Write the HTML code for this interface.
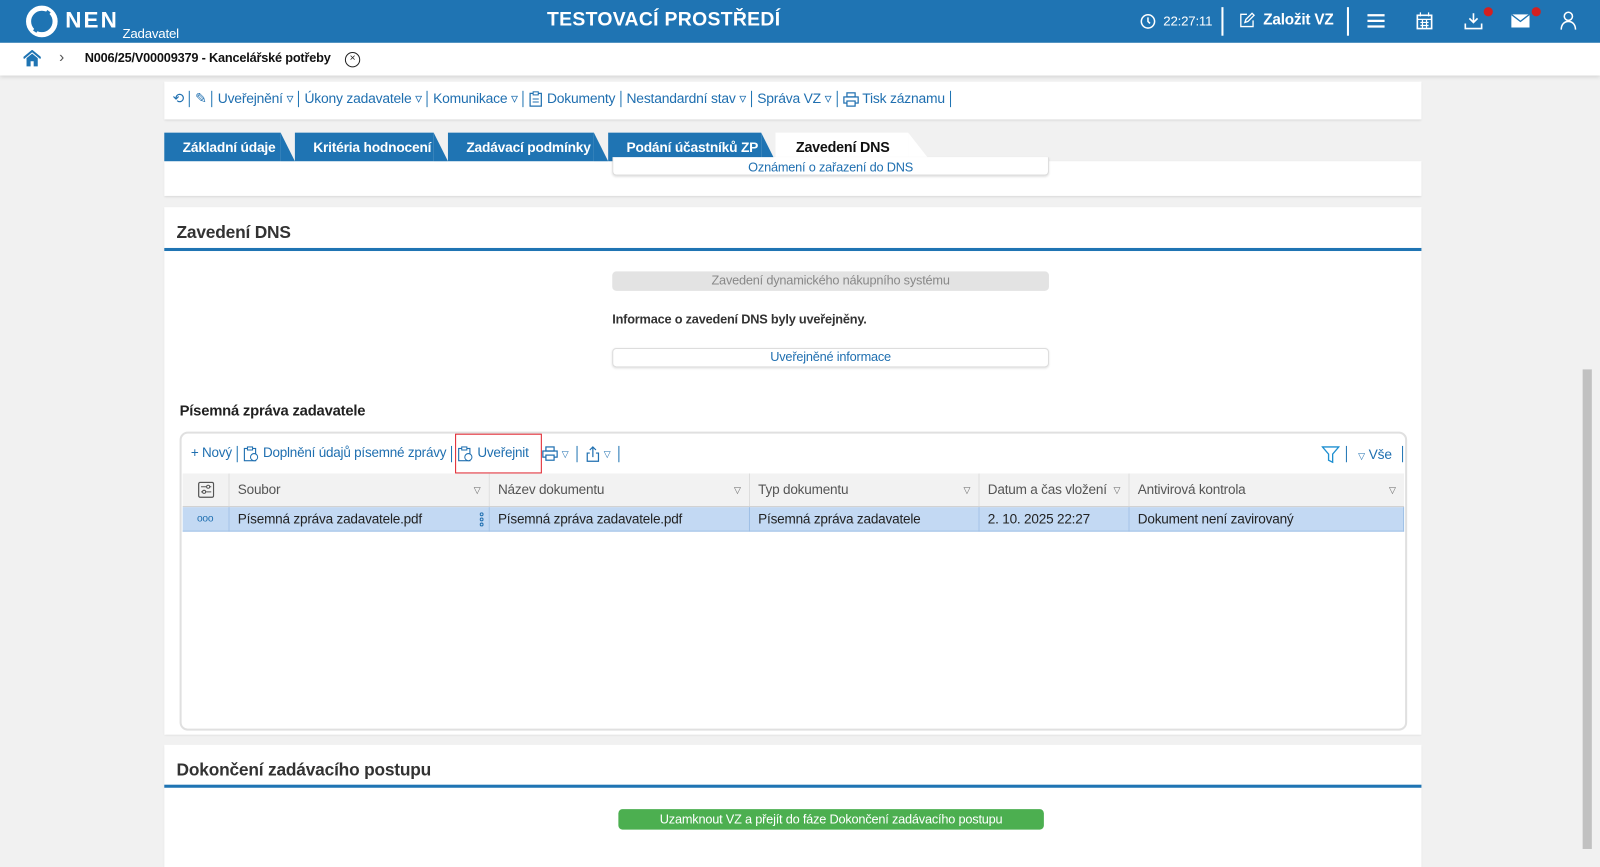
<!DOCTYPE html>
<html><head><meta charset="utf-8"><style>
*{box-sizing:border-box;margin:0;padding:0}
body{width:1600px;height:839px;overflow:hidden;background:#f1f1f1;font-family:"Liberation Sans",sans-serif;font-size:13px;color:#222;letter-spacing:-0.2px}
#w{position:relative;width:1568px;height:823px;transform:scale(1.020408);transform-origin:0 0}
.abs{position:absolute}
.hdr{left:0;top:0;width:1568px;height:42px;background:#1f74b3;color:#fff}
.bc{left:0;top:42px;width:1568px;height:32px;background:#fff;box-shadow:0 2px 4px rgba(0,0,0,.12)}
.panel{background:#fff;box-shadow:0 1px 2px rgba(0,0,0,.1)}
.lnk{color:#1f6fb0}
.sep{display:inline-block;width:1px;height:16px;background:#1f74b3;vertical-align:middle;margin:0 5px}
.tab{position:absolute;top:130px;height:28px;background:#1f74b3;color:#fff;font-weight:bold;font-size:13.5px;line-height:29px;padding-left:18px}
.tab:after{content:"";position:absolute;right:-14px;top:0;border-left:14px solid #1f74b3;border-top:28px solid transparent}
.btn{position:absolute;left:600px;width:428px;height:19px;border:1px solid #ddd;border-radius:4px;text-align:center;line-height:17px;font-size:12.5px;box-shadow:0 1px 2px rgba(0,0,0,.12);background:#fff}
.th{position:absolute;top:464px;height:32px;line-height:32px;color:#555;padding-left:8px;border-right:1px solid #ddd;background:#f2f2f2;font-size:13.3px}
.td{position:absolute;top:497px;height:24px;line-height:24px;padding-left:8px;border-right:1px solid #9fc0e6;background:#c3d9f3;font-size:13.3px}
.tri{position:absolute;right:8px;top:0;font-size:9px;color:#666}
svg{vertical-align:middle}
</style></head><body><div id="w">
<div class="abs hdr">
 <svg class="abs" style="left:25px;top:5px" width="32" height="32" viewBox="0 0 32 32"><circle cx="16" cy="16" r="13" fill="none" stroke="#fff" stroke-width="5"/><path d="M9 26 L23 6" stroke="#1f74b3" stroke-width="4"/></svg>
 <div class="abs" style="left:64px;top:7px;font-size:22px;font-weight:bold;letter-spacing:2px">NEN</div>
 <div class="abs" style="left:120px;top:25px;font-size:13px">Zadavatel</div>
 <div class="abs" style="left:536px;top:9px;font-size:19px;font-weight:bold;letter-spacing:0.3px">TESTOVACÍ PROSTŘEDÍ</div>
 <svg class="abs" style="left:1117px;top:13px" width="16" height="16" viewBox="0 0 16 16"><circle cx="8" cy="8" r="6.5" fill="none" stroke="#fff" stroke-width="1.5"/><path d="M8 4v4l2 2" stroke="#fff" stroke-width="1.5" fill="none"/></svg>
 <div class="abs" style="left:1140px;top:13px;font-size:13px">22:27:11</div>
 <div class="abs" style="left:1197px;top:7px;width:2px;height:28px;background:#fff"></div>
 <svg class="abs" style="left:1214px;top:12px" width="16" height="16" viewBox="0 0 16 16"><path d="M8 2H2v12h12V8M6 10l1-3 6-6 2 2-6 6z" fill="none" stroke="#fff" stroke-width="1.3"/></svg>
 <div class="abs" style="left:1238px;top:11px;font-size:15px;font-weight:bold">Založit VZ</div>
 <div class="abs" style="left:1320px;top:7px;width:2px;height:28px;background:#fff"></div>
 <svg class="abs" style="left:1340px;top:13px" width="17" height="15"><path d="M0 2h17M0 7.5h17M0 13h17" stroke="#fff" stroke-width="2.2"/></svg>
 <svg class="abs" style="left:1388px;top:12px" width="16" height="17"><rect x="1" y="3" width="14" height="13" fill="none" stroke="#fff" stroke-width="1.6"/><path d="M4 0v4M12 0v4M1 7h14M4 10h8M4 13h8M6 7v9M10 7v9" stroke="#fff" stroke-width="1.2"/></svg>
 <svg class="abs" style="left:1435px;top:12px" width="18" height="18"><path d="M9 1v9M5 6l4 4 4-4M1 11v5h16v-5" fill="none" stroke="#fff" stroke-width="1.6"/></svg>
 <div class="abs" style="left:1454px;top:7px;width:9px;height:9px;border-radius:50%;background:#d32020"></div>
 <svg class="abs" style="left:1481px;top:14px" width="18" height="13"><rect x="0" y="0" width="18" height="13" fill="#fff"/><path d="M0 0l9 7 9-7" stroke="#1f74b3" stroke-width="1.3" fill="none"/></svg>
 <div class="abs" style="left:1501px;top:7px;width:9px;height:9px;border-radius:50%;background:#d32020"></div>
 <svg class="abs" style="left:1529px;top:11px" width="16" height="19"><circle cx="8" cy="5" r="4" fill="none" stroke="#fff" stroke-width="1.5"/><path d="M1 18c0-5 3-8 7-8s7 3 7 8" fill="none" stroke="#fff" stroke-width="1.5"/></svg>
</div>
<div class="abs bc">
 <svg class="abs" style="left:23px;top:7px" width="17" height="17"><path d="M0 8L8.5 1 17 8" fill="none" stroke="#1f74b3" stroke-width="2"/><path d="M3 8v8h4v-5h3v5h4V8L8.5 3.5z" fill="#1f74b3"/></svg>
 <div class="abs" style="left:58px;top:6px;color:#555;font-size:15px">&#x203A;</div>
 <div class="abs" style="left:83px;top:8px;font-weight:bold;font-size:12.5px;color:#111">N006/25/V00009379 - Kancelářské potřeby</div>
 <div class="abs" style="left:338px;top:9px;width:15px;height:15px;border:1.3px solid #222;border-radius:50%;font-size:10px;text-align:center;line-height:12px">×</div>
</div>
<div class="abs panel" style="left:161px;top:80px;width:1232px;height:37px;padding:9px 0 0 8px;font-size:13.6px">
 <span class="lnk">⟲</span><span class="sep"></span><span class="lnk">✎</span><span class="sep"></span><span class="lnk">Uveřejnění ▿</span><span class="sep"></span><span class="lnk">Úkony zadavatele ▿</span><span class="sep"></span><span class="lnk">Komunikace ▿</span><span class="sep"></span><span class="lnk"><svg width="14" height="16"><rect x="1.5" y="2.5" width="11" height="12.5" fill="none" stroke="#1f6fb0" stroke-width="1.2"/><rect x="4.5" y="1" width="5" height="3" fill="#fff" stroke="#1f6fb0"/><path d="M4 8h6M4 11h6" stroke="#1f6fb0"/></svg> Dokumenty</span><span class="sep"></span><span class="lnk">Nestandardní stav ▿</span><span class="sep"></span><span class="lnk">Správa VZ ▿</span><span class="sep"></span><span class="lnk"><svg width="16" height="15"><rect x="4" y="1" width="8" height="4" fill="none" stroke="#1f6fb0" stroke-width="1.2"/><rect x="1" y="5" width="14" height="6" fill="none" stroke="#1f6fb0" stroke-width="1.2"/><rect x="4" y="9" width="8" height="5" fill="#fff" stroke="#1f6fb0" stroke-width="1.2"/></svg> Tisk záznamu</span><span class="sep"></span>
</div>
<div class="abs panel" style="left:161px;top:158px;width:1232px;height:34px"></div>
<div class="tab" style="left:161px;width:114px">Základní údaje</div>
<div class="tab" style="left:289px;width:136px">Kritéria hodnocení</div>
<div class="tab" style="left:439px;width:143px">Zadávací podmínky</div>
<div class="tab" style="left:596px;width:150px">Podání účastníků ZP</div>
<div class="abs" style="left:760px;top:130px;width:130px;height:28px;background:#fff;color:#111;font-weight:bold;font-size:14px;line-height:29px;padding-left:20px">Zavedení DNS</div>
<div class="abs" style="left:890px;top:130px;border-left:22px solid #fff;border-top:28px solid transparent;width:0"></div>
<div class="btn lnk" style="top:154px;height:18px;border-top:none;border-radius:0 0 4px 4px;line-height:20px">Oznámení o zařazení do DNS</div>

<div class="abs panel" style="left:161px;top:203px;width:1232px;height:517px">
 <div class="abs" style="left:12px;top:15px;font-size:17px;font-weight:bold;color:#333">Zavedení DNS</div>
 <div class="abs" style="left:0;top:40px;width:1232px;height:3px;background:#1f74b3"></div>
</div>
<div class="btn" style="top:266px;background:#e3e3e3;border-color:#e3e3e3;color:#888;box-shadow:none">Zavedení dynamického nákupního systému</div>
<div class="abs" style="left:600px;top:306px;font-weight:bold;font-size:12.5px;color:#333">Informace o zavedení DNS byly uveřejněny.</div>
<div class="btn lnk" style="top:341px">Uveřejněné informace</div>
<div class="abs" style="left:176px;top:395px;font-weight:bold;font-size:14.5px;color:#222">Písemná zpráva zadavatele</div>

<div class="abs" style="left:176px;top:423px;width:1203px;height:293px;border:2px solid #e0e0e0;border-radius:8px;background:#fff"></div>
<div class="abs" style="left:187px;top:436px;font-size:13.2px">
 <span class="lnk">+ Nový</span><span class="sep"></span><span class="lnk"><svg width="16" height="16"><rect x="1.5" y="2.5" width="11" height="12" fill="none" stroke="#1f6fb0" stroke-width="1.1"/><rect x="4.5" y="1" width="5" height="3" fill="#fff" stroke="#1f6fb0"/><circle cx="11" cy="11" r="3.5" fill="#fff" stroke="#1f6fb0"/></svg> Doplnění údajů písemné zprávy</span><span class="sep"></span><span class="lnk"><svg width="16" height="16"><rect x="1.5" y="2.5" width="11" height="12" fill="none" stroke="#1f6fb0" stroke-width="1.1"/><rect x="4.5" y="1" width="5" height="3" fill="#fff" stroke="#1f6fb0"/><circle cx="11" cy="11" r="3.5" fill="#fff" stroke="#1f6fb0"/></svg> Uveřejnit</span><span class="sep" style="background:transparent;margin:0 6px"></span><span class="lnk"><svg width="16" height="15"><rect x="4" y="1" width="8" height="4" fill="none" stroke="#1f6fb0" stroke-width="1.2"/><rect x="1" y="5" width="14" height="6" fill="none" stroke="#1f6fb0" stroke-width="1.2"/><rect x="4" y="9" width="8" height="5" fill="#fff" stroke="#1f6fb0" stroke-width="1.2"/></svg> <span style="font-size:9px">▽</span></span><span class="sep" style="margin:0 8px"></span><span class="lnk"><svg width="14" height="16"><path d="M4 7H1.5v8h11V7H10M7 11V1.5M4 4l3-3 3 3" fill="none" stroke="#1f6fb0" stroke-width="1.2"/></svg> <span style="font-size:9px">▽</span></span><span class="sep" style="margin:0 8px"></span>
</div>
<div class="abs" style="left:446px;top:425px;width:85px;height:39px;border:1px solid #e0202a"></div>
<svg class="abs" style="left:1295px;top:436px" width="18" height="18"><path d="M1 2h16l-6 7v8l-4-2V9z" fill="none" stroke="#1f8fd0" stroke-width="1.3"/></svg>
<div class="abs" style="left:1319px;top:437px;width:1px;height:16px;background:#1f74b3"></div>
<div class="abs lnk" style="left:1331px;top:438px;font-size:13.5px"><span style="font-size:9px">▽</span> Vše</div>
<div class="abs" style="left:1374px;top:437px;width:1px;height:16px;background:#1f74b3"></div>

<div class="th" style="left:179px;width:46px;padding:0;text-align:center"><svg width="16" height="16"><rect x="0.7" y="0.7" width="14.6" height="14.6" rx="1.5" fill="none" stroke="#555" stroke-width="1.2"/><path d="M3 5h10M3 10h10" stroke="#555"/><circle cx="10" cy="5" r="1.5" fill="#fff" stroke="#555"/><circle cx="6" cy="10" r="1.5" fill="#fff" stroke="#555"/></svg></div>
<div class="th" style="left:225px;width:255px">Soubor<span class="tri">▽</span></div>
<div class="th" style="left:480px;width:255px">Název dokumentu<span class="tri">▽</span></div>
<div class="th" style="left:735px;width:225px">Typ dokumentu<span class="tri">▽</span></div>
<div class="th" style="left:960px;width:147px">Datum a čas vložení<span class="tri">▽</span></div>
<div class="th" style="left:1107px;width:269px;border-right:none">Antivirová kontrola<span class="tri">▽</span></div>
<div class="abs" style="left:179px;top:496px;width:1197px;height:1px;background:#ccc"></div>
<div class="td lnk" style="left:179px;width:46px;padding-left:14px;font-size:10px">ooo</div>
<div class="td" style="left:225px;width:255px">Písemná zpráva zadavatele.pdf<svg class="abs" style="right:5px;top:5px" width="4" height="14"><circle cx="2" cy="2" r="1.4" fill="none" stroke="#1f6fb0"/><circle cx="2" cy="7" r="1.4" fill="none" stroke="#1f6fb0"/><circle cx="2" cy="12" r="1.4" fill="none" stroke="#1f6fb0"/></svg></div>
<div class="td" style="left:480px;width:255px">Písemná zpráva zadavatele.pdf</div>
<div class="td" style="left:735px;width:225px">Písemná zpráva zadavatele</div>
<div class="td" style="left:960px;width:147px">2. 10. 2025 22:27</div>
<div class="td" style="left:1107px;width:269px">Dokument není zavirovaný</div>
<div class="abs" style="left:179px;top:520px;width:1197px;height:1px;background:#9fc0e6"></div>

<div class="abs panel" style="left:161px;top:730px;width:1232px;height:120px">
 <div class="abs" style="left:12px;top:15px;font-size:17px;font-weight:bold;color:#333">Dokončení zadávacího postupu</div>
 <div class="abs" style="left:0;top:39px;width:1232px;height:3px;background:#1f74b3"></div>
</div>
<div class="abs" style="left:606px;top:793px;width:417px;height:20px;background:#4caf50;border-radius:4px;color:#fff;text-align:center;line-height:20px;font-size:12.5px">Uzamknout VZ a přejít do fáze Dokončení zadávacího postupu</div>
<div class="abs" style="left:1551px;top:362px;width:9px;height:470px;background:#c1c1c1"></div>
</div></body></html>
